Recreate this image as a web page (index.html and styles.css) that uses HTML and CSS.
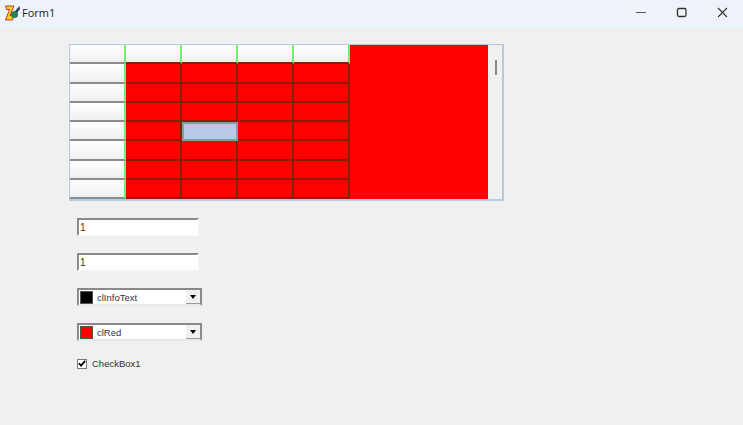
FILE: index.html
```html
<!DOCTYPE html>
<html lang="en">
<head>
    <meta charset="UTF-8">
    <meta name="viewport" content="width=device-width, initial-scale=1.0">
    <title>Form1</title>
    <link rel="stylesheet" href="styles.css">
</head>
<body>
    <header class="titlebar">
        <svg class="app-icon" width="16" height="16" viewBox="0 0 16 16">
            <path d="M0.5 1h8.5l-4 9.5h3.5l-1 4.5H0.5l4-10.5H1.5z" fill="#f4d21f" stroke="#c0281c" stroke-width="0.9"/>
            <circle cx="9.5" cy="9.5" r="3.6" fill="#2b7f58"/>
            <path d="M10 6l4.5-5 0.5 3-3 4z" fill="#27406f"/>
        </svg>
        <span class="title">Form1</span>
        <div class="window-buttons">
            <svg width="40" height="27" viewBox="0 0 40 27"><path d="M14 12.5h10" stroke="#555" fill="none"/></svg>
            <svg width="40" height="27" viewBox="0 0 40 27"><rect x="15.5" y="8.5" width="8.5" height="8" rx="1.5" stroke="#333" stroke-width="1.3" fill="none"/></svg>
            <svg width="40" height="27" viewBox="0 0 40 27"><path d="M16 8l9 9M25 8l-9 9" stroke="#333" stroke-width="1.1" fill="none"/></svg>
        </div>
    </header>

    <main class="form">
        <div class="string-grid">
            <div class="grid-area">
                <div class="cells" id="cells"></div>
            </div>
            <div class="scrollbar"><div class="scroll-thumb"></div></div>
        </div>

        <input class="edit" type="text" value="1">
        <input class="edit edit-second" type="text" value="1">

        <div class="color-box">
            <span class="swatch swatch-black"></span>
            <span class="color-name">clInfoText</span>
            <span class="drop-button"><span class="arrow"></span></span>
        </div>
        <div class="color-box">
            <span class="swatch swatch-red"></span>
            <span class="color-name">clRed</span>
            <span class="drop-button"><span class="arrow"></span></span>
        </div>

        <div class="check-row">
            <span class="check-box">
                <svg width="9" height="9" viewBox="0 0 9 9"><path d="M1 4.2l2.4 2.6L8 1.5" stroke="#000" stroke-width="2" fill="none"/></svg>
            </span>
            <span>CheckBox1</span>
        </div>
    </main>

    <script>
        // Build the 5x8 string grid
        const cells = document.querySelector('#cells');
        for (let row = 0; row < 8; row++) {
            for (let col = 0; col < 5; col++) {
                const cell = document.createElement('div');
                cell.classList.add('cell');
                if (row === 0 || col === 0) cell.classList.add('fixed');
                if (row === 0 && col > 0) cell.classList.add('fixed-top');
                if (row === 4 && col === 2) cell.classList.add('selected');
                cells.appendChild(cell);
            }
        }
    </script>
</body>
</html>
```

FILE: styles.css
```css
/* General Styles */
body {
    margin: 0;
    background-color: #f0f0f0;
    font-family: "Liberation Sans", Arial, sans-serif;
    font-size: 9.5px;
    color: #333;
    overflow: hidden;
}

/* Title bar */
.titlebar {
    box-sizing: border-box;
    display: flex;
    align-items: center;
    height: 27px;
    padding: 0 1px 2px 5px;
    background-color: #eef3f9;
}

.title {
    margin-left: 1px;
    font-family: "Open Sans", sans-serif;
    font-size: 11px;
    color: #222;
}

.window-buttons {
    display: flex;
    margin: 0 0 -2px auto;
}

/* Form */
.form {
    display: flex;
    flex-direction: column;
    align-items: flex-start;
    padding: 17px 0 0 69px;
}

/* String grid */
.string-grid {
    display: flex;
    width: 432px;
    height: 154px;
    border: 2px solid #b8c9dc;
    border-width: 1px 2px 2px 1px;
}

.grid-area {
    width: 418px;
    background-color: #ff0000;
}

.cells {
    display: grid;
    grid-template-columns: repeat(5, 56px);
    grid-auto-rows: 19.25px;
    width: 280px;
}

.cell {
    box-sizing: border-box;
    border-right: 2px solid #7c2600;
    border-bottom: 2px solid #8a1c00;
}

.fixed {
    background: linear-gradient(#ffffff, #efefef);
    border-right: 2px solid #72f072;
    border-bottom: 2px solid #8c8c8c;
}

.fixed-top {
    border-bottom-color: #8a1c00;
}

.selected {
    background-color: #b7cbe8;
    border: 2px solid #7fa0a8;
}

/* Scrollbar */
.scrollbar {
    flex: 1;
    background-color: #f0f0f0;
    padding: 15px 0 0 7px;
}

.scroll-thumb {
    width: 2px;
    height: 15px;
    background-color: #8b8b8b;
}

/* Edits */
.edit {
    box-sizing: border-box;
    width: 122px;
    height: 18px;
    margin: 17px 0 0 8px;
    padding: 0 0 0 1px;
    border: 2px solid;
    border-color: #8a8a8a #fafafa #fafafa #8a8a8a;
    background-color: #fff;
    font-family: inherit;
    font-size: 10px;
    color: #333;
    outline: none;
}

/* Color boxes */
.color-box {
    box-sizing: border-box;
    display: flex;
    align-items: center;
    width: 125px;
    height: 18px;
    margin: 17px 0 0 8px;
    border: 2px solid;
    border-color: #8a8a8a #8a8a8a #e8e8e8 #8a8a8a;
    background-color: #fff;
}

.swatch {
    box-sizing: border-box;
    width: 13px;
    height: 13px;
    margin-left: 1px;
    border: 1px solid #555;
}

.swatch-black {
    background-color: #000;
}

.swatch-red {
    background-color: #ff0000;
}

.color-name {
    margin-left: 4px;
}

.drop-button {
    display: flex;
    justify-content: center;
    align-items: center;
    align-self: stretch;
    width: 14px;
    margin-left: auto;
    background-color: #f0f0f0;
    border-left: 1px solid #fff;
    box-shadow: inset 0 -1px 0 #9a9a9a;
}

.arrow {
    width: 0;
    height: 0;
    border-left: 3.5px solid transparent;
    border-right: 3.5px solid transparent;
    border-top: 4px solid #000;
}

/* Checkbox */
.check-row {
    display: flex;
    align-items: center;
    gap: 5px;
    margin: 17px 0 0 8px;
}

.check-box {
    box-sizing: border-box;
    display: flex;
    justify-content: center;
    align-items: center;
    width: 10px;
    height: 10px;
    border: 1px solid #777;
    background-color: #fff;
}
```
